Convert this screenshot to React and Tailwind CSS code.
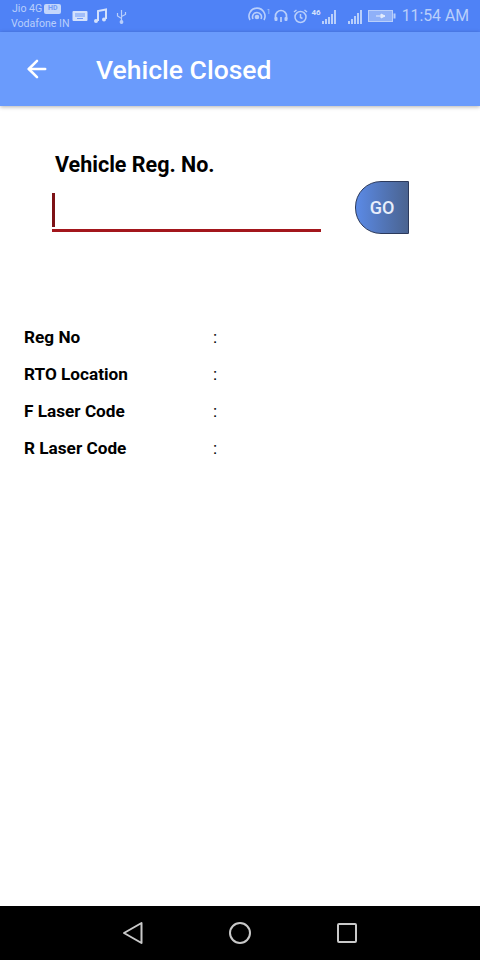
import { ArrowLeft } from 'lucide-react';

const rows = ['Reg No', 'RTO Location', 'F Laser Code', 'R Laser Code'];

function StatusBar() {
  return (
    <div className="flex h-8 items-center justify-between bg-[#4f82f6] pl-[11px] pr-[11px] text-[#b9cffb]">
      <div className="flex items-center">
        <div className="flex flex-col text-[10.6px] leading-[15px]">
          <div className="flex items-center gap-[2px]">
            <span className="pl-px">Jio 4G</span>
            <span className="flex h-[10px] w-[17px] items-center justify-center rounded-[2px] bg-[#c3d6fb] text-[7px] font-bold leading-none text-[#6f9af7]">HD</span>
          </div>
          <span>Vodafone IN</span>
        </div>
        <div className="ml-[2px] flex items-center gap-[5px]">
          <svg width="16" height="12" viewBox="0 0 16 12">
            <rect x="0.5" y="1" width="15" height="10" rx="1" fill="#d3e1fc" />
            <path d="M3 4h10M3 6h10M5 8.5h6" stroke="#6f9af7" strokeWidth="1" />
          </svg>
          <svg width="15" height="16" viewBox="0 0 15 16" fill="none" stroke="#d3e1fc" strokeWidth="2">
            <path d="M5 13V3l8-1.5V11" />
            <circle cx="3" cy="13" r="2" fill="#d3e1fc" stroke="none" />
            <circle cx="11" cy="11.5" r="2" fill="#d3e1fc" stroke="none" />
          </svg>
          <svg width="11" height="15" viewBox="0 0 11 15" fill="none" stroke="#b9cffb" strokeWidth="1.2" className="ml-[3px]">
            <path d="M5.5 1v13M1.5 4v3l4 2.5M9.5 3v2.5l-4 2" />
            <circle cx="5.5" cy="13" r="1.3" fill="#b9cffb" />
          </svg>
        </div>
      </div>
      <div className="flex items-center">
        <svg width="20" height="18" viewBox="0 0 20 18" fill="none" stroke="#b9cffb" strokeWidth="1.6">
          <path d="M3 13a8 8 0 1 1 14 0" />
          <path d="M6 12a4.5 4.5 0 1 1 8 0" />
          <circle cx="10" cy="10" r="1.5" fill="#b9cffb" />
        </svg>
        <span className="mb-2 text-[7px] leading-none">1</span>
        <svg width="16" height="16" viewBox="0 0 16 16" fill="none" stroke="#b9cffb" strokeWidth="1.7" className="ml-[3px]">
          <path d="M2.5 11V8a5.5 5.5 0 0 1 11 0v3" />
          <rect x="1.5" y="9" width="3" height="4" rx="1" fill="#b9cffb" stroke="none" />
          <rect x="11.5" y="9" width="3" height="4" rx="1" fill="#b9cffb" stroke="none" />
          <path d="M8 9v5" />
        </svg>
        <svg width="15" height="15" viewBox="0 0 15 15" fill="none" stroke="#b9cffb" strokeWidth="1.5" className="ml-[4px]">
          <circle cx="7.5" cy="8" r="5.5" />
          <path d="M7.5 5v3.5l2 1M1 3l2.5-2M14 3l-2.5-2" />
        </svg>
        <div className="ml-[3px] flex h-4 items-end gap-[1px]">
          <span className="mb-[7px] text-[8px] font-bold leading-none text-[#d3e1fc]">46</span>
          <span className="h-[3px] w-[2px] bg-[#b9cffb]" />
          <span className="h-[5px] w-[2px] bg-[#b9cffb]" />
          <span className="h-[7px] w-[2px] bg-[#b9cffb]" />
          <span className="h-[10px] w-[2px] bg-[#b9cffb]" />
          <span className="h-[14px] w-[2px] bg-[#b9cffb]" />
        </div>
        <div className="ml-[12px] flex h-4 items-end gap-[1px]">
          <span className="h-[3px] w-[2px] bg-[#b9cffb]" />
          <span className="h-[5px] w-[2px] bg-[#b9cffb]" />
          <span className="h-[8px] w-[2px] bg-[#b9cffb]" />
          <span className="h-[11px] w-[2px] bg-[#b9cffb]" />
          <span className="h-[14px] w-[2px] bg-[#b9cffb]" />
        </div>
        <svg width="28" height="12" viewBox="0 0 28 12" className="ml-[6px]">
          <rect x="0.5" y="0.5" width="24" height="11" fill="#8fb0f8" stroke="#b9cffb" />
          <rect x="25.5" y="3.5" width="2" height="5" fill="#b9cffb" />
          <path d="M8 6h9M13 4l4 2-4 2z" stroke="#e3ecfd" fill="#e3ecfd" />
        </svg>
        <span className="ml-[6px] font-['Roboto',sans-serif] text-[15.8px] leading-none">11:54 AM</span>
      </div>
    </div>
  );
}

export default function App() {
  return (
    <div className="flex h-[960px] w-[480px] flex-col overflow-hidden bg-white font-['Roboto',sans-serif]">
      <StatusBar />

      {/* App bar */}
      <div className="flex h-[74px] items-center bg-[#6a9bfc] pl-[23px] shadow-[0_1px_4px_rgba(0,0,0,0.3)]">
        <ArrowLeft size={28} strokeWidth={2.2} className="text-white" />
        <h1 className="ml-[45px] pt-[2px] text-[26.5px] font-medium leading-none text-white">Vehicle Closed</h1>
      </div>

      <div className="flex-1">
        {/* Reg no entry */}
        <div className="flex pl-[52px] pt-[47px]">
          <div className="w-[269px]">
            <p className="pl-[3px] text-[21.5px] font-bold leading-[24px] text-black">Vehicle Reg. No.</p>
            <div className="mt-[16px] h-[39px] border-b-[3px] border-[#a3161c]">
              <div className="h-[34px] w-[3px] bg-[#7d1216]" />
            </div>
          </div>
          <button className="ml-[34px] mt-[28px] flex h-[53px] w-[54px] items-center justify-center rounded-l-[26px] border border-[#2c3a5c] bg-gradient-to-r from-[#5b8ae6] to-[#4a6390] text-[18px] font-medium text-[#e8eefb]">
            GO
          </button>
        </div>

        {/* Vehicle details */}
        <div className="mt-[85px] flex flex-col pl-[24px]">
          {rows.map((label) => (
            <div key={label} className="flex h-[37px] items-center text-[17.2px] font-bold text-black">
              <span className="w-[189px]">{label}</span>
              <span className="font-normal">:</span>
            </div>
          ))}
        </div>
      </div>

      {/* Android nav bar */}
      <div className="flex h-[54px] items-center justify-center gap-[84px] bg-black">
        <svg width="22" height="24" viewBox="0 0 22 24" fill="none" stroke="#c9c9c9" strokeWidth="2" strokeLinejoin="round">
          <path d="M19.5 2v20L2 12z" />
        </svg>
        <svg width="24" height="24" viewBox="0 0 24 24" fill="none" stroke="#c9c9c9" strokeWidth="2">
          <circle cx="12" cy="12" r="10" />
        </svg>
        <svg width="22" height="22" viewBox="0 0 22 22" fill="none" stroke="#c9c9c9" strokeWidth="2">
          <rect x="2" y="2" width="18" height="18" rx="1" />
        </svg>
      </div>
    </div>
  );
}
